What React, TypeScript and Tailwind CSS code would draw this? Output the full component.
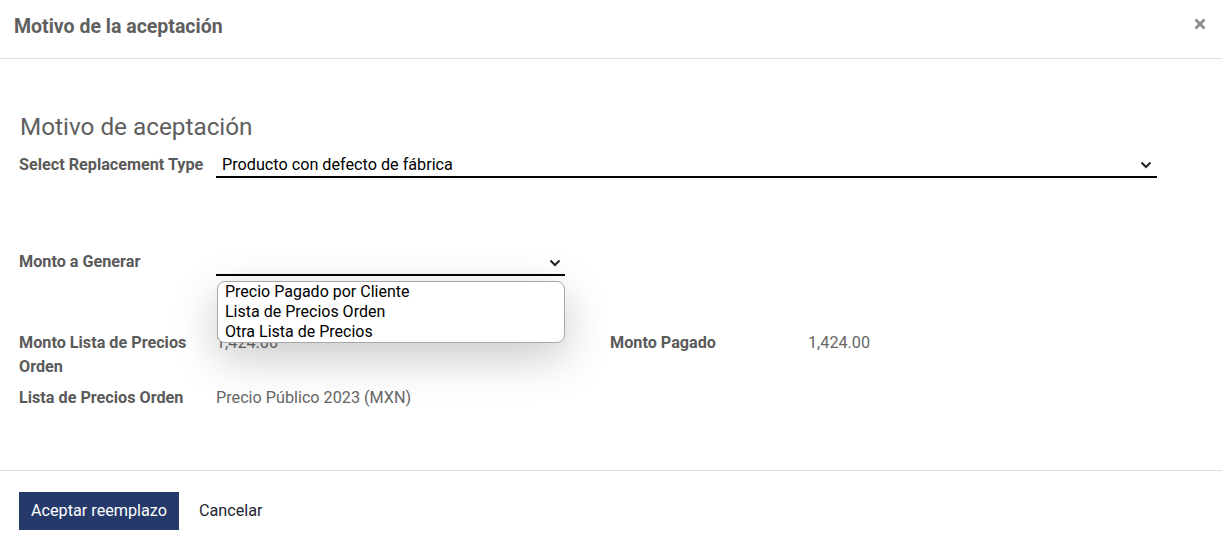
import React from "react";

const FONT = { fontFamily: "Roboto, 'Noto Sans', sans-serif" };

function Chevron() {
  return (
    <svg width="12" height="8" viewBox="0 0 12 8" className="shrink-0">
      <path d="M1.5 1.5 L6 6 L10.5 1.5" fill="none" stroke="#222" strokeWidth="2" />
    </svg>
  );
}

const OPTIONS = ["Precio Pagado por Cliente", "Lista de Precios Orden", "Otra Lista de Precios"];

export default function App() {
  return (
    <div className="h-[552px] w-[1222px] bg-white text-[#212529]" style={FONT}>
      {/* Header */}
      <div className="flex h-[59px] items-center justify-between border-b border-[#dee2e6] pb-[4px] pl-[14px] pr-[16px]">
        <h4 className="text-[19.5px] font-bold text-[#5f5f5f]">Motivo de la aceptación</h4>
        <svg width="12" height="12" viewBox="0 0 12 12" className="mt-[-6px]">
          <path d="M1.5 1.5 L10.5 10.5 M10.5 1.5 L1.5 10.5" stroke="#8a8a8a" strokeWidth="2.6" />
        </svg>
      </div>

      {/* Body */}
      <div className="h-[412px] border-b border-[#dee2e6] pl-[19px] pt-[53px]">
        <div className="mb-[12px] pl-[1px] text-[24.3px] leading-[30px] text-[#5f5f5f]">Motivo de aceptación</div>

        <div className="flex items-end">
          <div className="w-[197px] pb-[2px] text-[16.2px] font-bold leading-[22px] text-[#5a5a5a]">Select Replacement Type</div>
          <div className="flex w-[941px] items-center justify-between border-b-2 border-black pl-[6px] pr-[5px]">
            <span className="text-[16.2px] leading-[22px] text-black">Producto con defecto de fábrica</span>
            <Chevron />
          </div>
        </div>

        <div className="mt-[73px] flex items-end">
          <div className="w-[197px] pb-[3px] text-[16.2px] font-bold leading-[22px] text-[#5a5a5a]">Monto a Generar</div>
          <div className="relative w-[349px]">
            <div className="flex h-[24px] items-center justify-end border-b-2 border-black pr-[4px]">
              <Chevron />
            </div>
            <div className="absolute left-[1px] top-[29px] z-10 w-[348px] rounded-[8px] border border-[#a8a8a8] bg-white pl-[7px] shadow-[0_14px_45px_rgba(0,0,0,0.22)]">
              {OPTIONS.map((o) => (
                <div key={o} className="text-[16px] leading-[20px] text-black">
                  {o}
                </div>
              ))}
            </div>
          </div>
        </div>

        <div className="mt-[55px] flex">
          <div className="w-[197px] text-[16.2px] font-bold leading-[24px] text-[#5a5a5a]">
            Monto Lista de Precios
            <br />
            Orden
          </div>
          <div className="w-[394px] text-[16.2px] leading-[24px] text-[#666]">1,424.00</div>
          <div className="w-[198px] text-[16.2px] font-bold leading-[24px] text-[#5a5a5a]">Monto Pagado</div>
          <div className="text-[16.2px] leading-[24px] text-[#666]">1,424.00</div>
        </div>

        <div className="mt-[7px] flex">
          <div className="w-[197px] text-[16.2px] font-bold leading-[24px] text-[#5a5a5a]">Lista de Precios Orden</div>
          <div className="text-[16.2px] leading-[24px] text-[#666]">Precio Público 2023 (MXN)</div>
        </div>
      </div>

      {/* Footer */}
      <div className="flex items-center gap-[8px] pl-[19px] pt-[21px]">
        <button type="button" className="h-[38px] w-[160px] bg-[#25396b] text-[16.2px] text-white">
          Aceptar reemplazo
        </button>
        <button type="button" className="h-[38px] px-[12px] text-[16.2px] text-[#1f2433]">
          Cancelar
        </button>
      </div>
    </div>
  );
}
